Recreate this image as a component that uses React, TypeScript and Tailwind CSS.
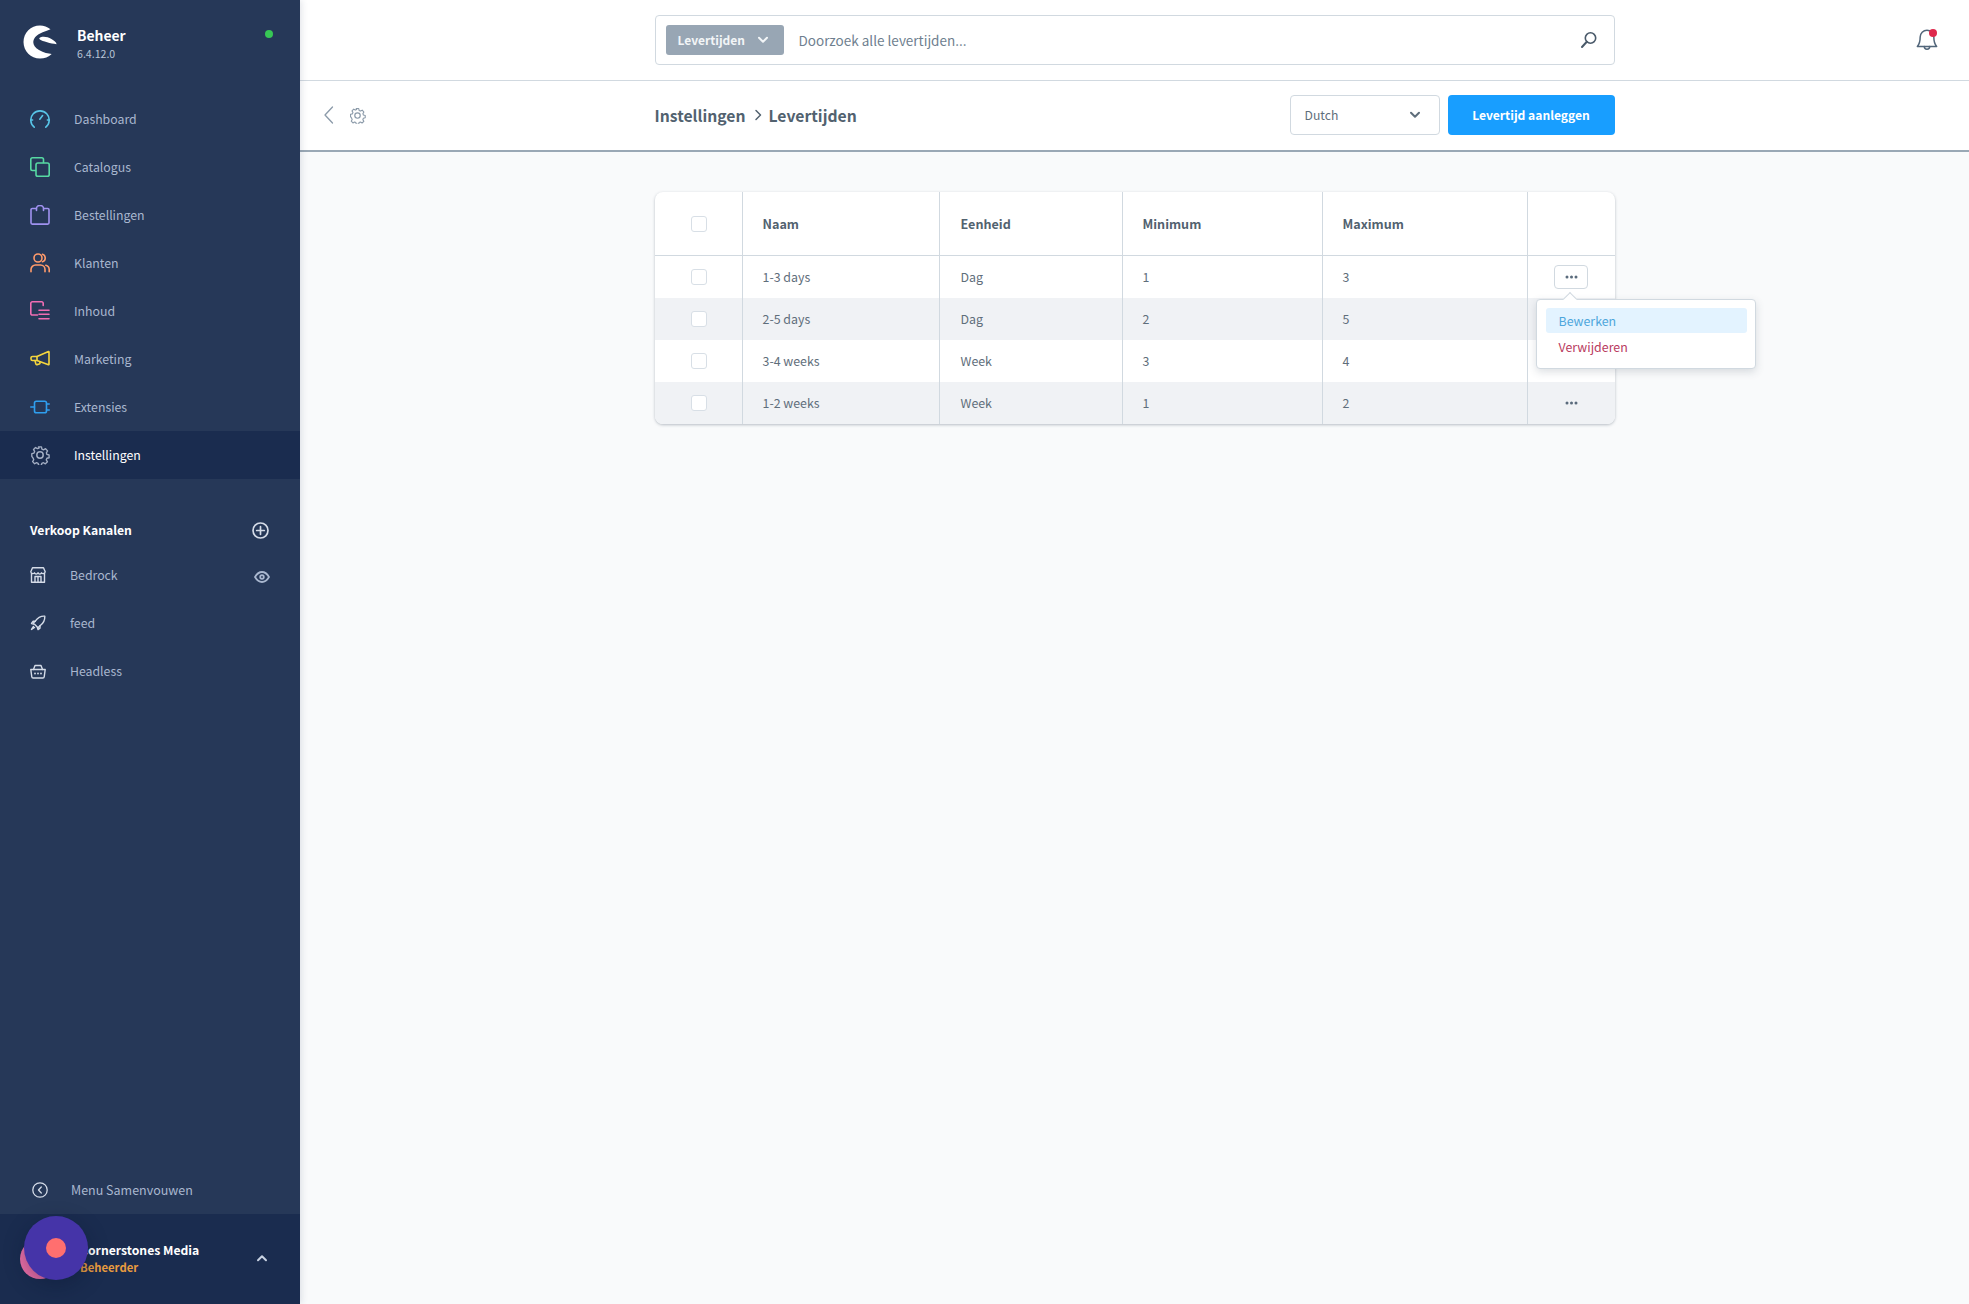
import React from "react";

const Stroke = ({ children, className, size = 20, vb = 20, sw = 1.6 }: { children: React.ReactNode; className?: string; size?: number; vb?: number; sw?: number }) => (
  <svg width={size} height={size} viewBox={`0 0 ${vb} ${vb}`} fill="none" stroke="currentColor" strokeWidth={sw} strokeLinecap="round" strokeLinejoin="round" className={className}>
    {children}
  </svg>
);

const Gear = ({ size = 20, sw = 1.5 }: { size?: number; sw?: number }) => (
  <Stroke size={size} sw={sw}>
    <circle cx="10" cy="10" r="3.2" />
    <path d="M8.4 1h3.2l.5 2.5 1.7.8 2.3-1.2 2.2 2.4-1.3 2.1.6 1.8 2.4.6v3l-2.4.6-.7 1.7 1.3 2.2-2.3 2.2-2.1-1.2-1.8.7-.5 2.3h-3l-.6-2.4-1.7-.7-2.1 1.2-2.2-2.3 1.2-2.1-.7-1.8L1 11.5v-3l2.4-.6.7-1.8-1.2-2.1 2.2-2.2 2.1 1.2 1.8-.7z" transform="translate(0.9 0.9) scale(0.91)" />
  </Stroke>
);

const navItems: { label: string; color: string; icon: React.ReactNode }[] = [
  {
    label: "Dashboard",
    color: "text-[#58c5e8]",
    icon: (
      <>
        <path d="M4.2 18.2A9.2 9.2 0 1 1 15.8 18.2" />
        <path d="M9.8 10.2 12.6 6.6" />
        <path d="M1 11h1.6M17.4 11H19" />
      </>
    ),
  },
  {
    label: "Catalogus",
    color: "text-[#57d9a3]",
    icon: (
      <>
        <path d="M5.5 13.5H2.5a1.7 1.7 0 0 1-1.7-1.7V2.5A1.7 1.7 0 0 1 2.5.8h9.3a1.7 1.7 0 0 1 1.7 1.7v3" />
        <rect x="6" y="6" width="13.2" height="13.2" rx="1.8" />
      </>
    ),
  },
  {
    label: "Bestellingen",
    color: "text-[#a092f0]",
    icon: (
      <>
        <path d="M6 3.5H2.3A1.3 1.3 0 0 0 1 4.8v13a1.3 1.3 0 0 0 1.3 1.3h15.4a1.3 1.3 0 0 0 1.3-1.3v-13a1.3 1.3 0 0 0-1.3-1.3H14" />
        <path d="M6.5 5.5V3.6a3.5 3.1 0 0 1 7 0v1.9" />
      </>
    ),
  },
  {
    label: "Klanten",
    color: "text-[#ff9b6b]",
    icon: (
      <>
        <circle cx="8" cy="5" r="4" />
        <path d="M1 18.8v-2.3A4.5 4.5 0 0 1 5.5 12h5a4.5 4.5 0 0 1 4.5 4.5v2.3" />
        <path d="M12.5 1.2a4 4 0 0 1 0 7.6" />
        <path d="M15.8 12.2a4.5 4.5 0 0 1 3.4 4.3v2.3" />
      </>
    ),
  },
  {
    label: "Inhoud",
    color: "text-[#ef6db3]",
    icon: (
      <>
        <path d="M7.5 14H2.3A1.5 1.5 0 0 1 .8 12.5V2.3A1.5 1.5 0 0 1 2.3.8h9.4a1.5 1.5 0 0 1 1.5 1.5v2.2" />
        <path d="M9 9.2h10M9 13.2h10M9 17.8h10" />
      </>
    ),
  },
  {
    label: "Marketing",
    color: "text-[#f5d63d]",
    icon: (
      <>
        <path d="M7 7.5 18.5 2.5a.4.4 0 0 1 .5.4v12.4a.4.4 0 0 1-.5.4L7 11.5H2.5A1.5 1.5 0 0 1 1 10V9a1.5 1.5 0 0 1 1.5-1.5z" />
        <path d="M7 7.5v4M5 11.5l.8 3.4a1 1 0 0 0 1.2.7l2.3-.6a1 1 0 0 0 .7-1.2l-.3-1" />
      </>
    ),
  },
  {
    label: "Extensies",
    color: "text-[#2f9fef]",
    icon: (
      <>
        <rect x="4.5" y="4.3" width="12" height="11.4" rx="1.8" />
        <path d="M.8 10h3.7M16.5 7h2.7M16.5 13h2.7" />
      </>
    ),
  },
];

const rows = [
  ["1-3 days", "Dag", "1", "3"],
  ["2-5 days", "Dag", "2", "5"],
  ["3-4 weeks", "Week", "3", "4"],
  ["1-2 weeks", "Week", "1", "2"],
];

const COLS = "grid grid-cols-[87px_197px_183px_200px_205px_88px]";

const Checkbox = () => <span className="block w-4 h-4 ml-[1px] rounded-[3px] border border-[#d8dfe6] bg-white" />;

const Dots = () => (
  <svg width="13" height="4" viewBox="0 0 13 4" fill="#5a6b7c">
    <circle cx="2" cy="2" r="1.5" />
    <circle cx="6.5" cy="2" r="1.5" />
    <circle cx="11" cy="2" r="1.5" />
  </svg>
);

const Chevron = ({ className }: { className?: string }) => (
  <svg width="12" height="8" viewBox="0 0 12 8" fill="none" stroke="currentColor" strokeWidth="2" strokeLinecap="round" strokeLinejoin="round" className={className}>
    <path d="M2 1.8 6 5.8 10 1.8" />
  </svg>
);

function Sidebar() {
  return (
    <aside className="w-[300px] shrink-0 h-[1304px] bg-[#263858] flex flex-col relative shadow-[2px_0_6px_rgba(40,60,90,0.12)]">
      <div className="h-[95px] shrink-0 flex items-start pt-[25px] pl-[23px] relative">
        <svg width="34" height="34" viewBox="0 0 34 34" fill="#fff">
          <path d="M27.5 4.3C24.5 1.8 20.8.5 17 .5 7.8.5.5 7.8.5 17S7.8 33.5 17 33.5c4.500 0 8.600-1.700 11.700-4.600-3.400-.4-8-1.200-12.700-4C12 22.600 10.300 20 10.300 17.200c0-3.500 2.600-6.800 6.800-8.700 3.300-1.500 7.400-2.900 10.400-4.200z" />
          <path d="M17.600 12.300c3-.9 7.400-.4 10.800 1.600 2.700 1.500 5 3.300 5.200 5.300-3.400-.5-6.200-1-9.500-2-3.200-1-5.800-1.800-7.200-2.800-1.100-.8-.6-1.600.7-2.100z" />
        </svg>
        <div className="ml-[20px] flex flex-col">
          <span className="text-white text-[13.9px] leading-[20px] font-semibold">Beheer</span>
          <span className="text-[#b8c4d6] text-[10.6px] leading-[15px] mt-[1px]">6.4.12.0</span>
        </div>
        <span className="absolute left-[265px] top-[30px] w-2 h-2 rounded-full bg-[#37c755]" />
      </div>
      <nav className="flex flex-col">
        {navItems.map((i) => (
          <div key={i.label} className="h-12 flex items-center pl-[30px]">
            <Stroke className={i.color}>{i.icon}</Stroke>
            <span className="ml-[24px] text-[12.3px] text-[#a9b7cf]">{i.label}</span>
          </div>
        ))}
        <div className="h-12 flex items-center pl-[30px] bg-[#1a2c4f]">
          <span className="text-[#a3aec3]">
            <Gear />
          </span>
          <span className="ml-[24px] text-[12.3px] text-white">Instellingen</span>
        </div>
      </nav>
      <div className="mt-[39px] h-6 flex items-center justify-between pl-[30px] pr-[31px]">
        <span className="text-white text-[12.2px] font-semibold">Verkoop Kanalen</span>
        <Stroke size={17} sw={2} className="text-[#d5dce8]">
          <circle cx="10" cy="10" r="8.8" />
          <path d="M10 5.5v9M5.5 10h9" />
        </Stroke>
      </div>
      <div className="mt-[9px] flex flex-col">
        <div className="h-12 flex items-center pl-[30px] pr-[30px]">
          <Stroke size={16} sw={1.4} vb={16} className="text-[#d5dce8]">
            <path d="M2.5 .8h11l1.7 4a2 2 0 0 1-3.6 1 1.9 1.9 0 0 1-3.6 0 1.9 1.9 0 0 1-3.6 0 2 2 0 0 1-3.6-1z" />
            <path d="M1.5 6.5v8.7h13V6.5" />
            <path d="M5 15V9.5h6V15M8 9.5V15" />
          </Stroke>
          <span className="ml-[24px] text-[12.3px] text-[#a9b7cf] flex-1">Bedrock</span>
          <Stroke size={16} sw={1.8} vb={16} className="text-[#a9b7cf] mt-[3px]">
            <path d="M1 8c2-3.400 4.400-5 7-5s5 1.600 7 5c-2 3.400-4.400 5-7 5s-5-1.600-7-5z" />
            <circle cx="8" cy="8" r="1.8" />
          </Stroke>
        </div>
        <div className="h-12 flex items-center pl-[30px]">
          <Stroke size={16} sw={1.4} vb={16} className="text-[#d5dce8]">
            <path d="M14.8 1.200c-4-.3-7 1.300-9.500 5l-2 1.800 4.700 4.700 2-1.900c3.400-2.500 5-5.600 4.800-9.600z" />
            <path d="M5.300 6.300H3L1.500 8.500l2 .6M10 10.800v2.300l-2 1.500-.6-2" />
            <path d="M3.500 11.500 1.500 14.500l3-2" />
          </Stroke>
          <span className="ml-[24px] text-[12.3px] text-[#a9b7cf]">feed</span>
        </div>
        <div className="h-12 flex items-center pl-[30px]">
          <Stroke size={16} sw={1.4} vb={16} className="text-[#d5dce8]">
            <path d="M.8 6.500h14.400l-1 7.300a1.300 1.300 0 0 1-1.300 1.200H3.100a1.300 1.300 0 0 1-1.300-1.200z" />
            <path d="M3.500 6.500 5 2.500h6l1.500 4" />
            <path d="M5 10.500h.01M8 10.500h.01M11 10.500h.01" strokeWidth="1.8" />
          </Stroke>
          <span className="ml-[24px] text-[12.3px] text-[#a9b7cf]">Headless</span>
        </div>
      </div>
      <div className="mt-auto h-12 flex items-center pl-[32px]">
        <Stroke size={16} sw={1.3} vb={16} className="text-[#d5dce8]">
          <circle cx="8" cy="8" r="7.2" />
          <path d="M9.300 5 6.500 8l2.800 3" />
        </Stroke>
        <span className="ml-[23px] text-[12.5px] text-[#a9b7cf]">Menu Samenvouwen</span>
      </div>
      <div className="h-[90px] bg-[#1a2c4f] relative flex items-center">
        <span className="absolute left-[20px] top-[25px] w-10 h-10 rounded-full bg-[#ee6fa8]" />
        <div className="pl-[80px] flex flex-col mt-[-1px]">
          <span className="text-white text-[12.2px] leading-[18px] font-semibold">Cornerstones Media</span>
          <span className="text-[#e89c3f] text-[11.3px] leading-[17px] font-semibold">Beheerder</span>
        </div>
        <Chevron className="absolute left-[256px] top-[40px] rotate-180 text-[#c8d2e2]" />
      </div>
      <div className="absolute left-[24px] top-[1216px] w-16 h-16 rounded-full bg-[#4534a8] shadow-[0_6px_20px_rgba(10,20,50,0.35)] flex items-center justify-center">
        <span className="w-5 h-5 rounded-full bg-[#ff6f6f]" />
      </div>
    </aside>
  );
}

function Main() {
  return (
    <main className="flex-1 min-w-0 flex flex-col bg-[#f9fafb] h-[1304px] text-[#52626f]">
      <header className="h-[81px] shrink-0 bg-white border-b border-[#d1d9e0] grid grid-cols-[1fr_960px_1fr] items-center">
        <div />
        <div className="h-[50px] rounded-[4px] border border-[#d1d9e0] flex items-center pl-[10px] pr-[16px] mt-[-1px]">
          <div className="w-[118px] h-[30px] rounded-[3px] bg-[#98a6b4] flex items-center justify-between pl-[12px] pr-[15px] text-[#f2f5f7] text-[12px] font-semibold">
            <span>Levertijden</span>
            <Chevron />
          </div>
          <span className="ml-[15px] mt-[1px] flex-1 text-[#6f7f8f] text-[13.5px]">Doorzoek alle levertijden...</span>
          <svg width="18" height="18" viewBox="0 0 18 18" fill="none" stroke="#4a5a6a" strokeWidth="1.6" strokeLinecap="round">
            <circle cx="10.5" cy="7" r="5.2" />
            <path d="M6.800 10.800 2 16" strokeWidth="2" />
          </svg>
        </div>
        <div className="relative h-full">
          <svg width="26" height="26" viewBox="0 0 24 24" fill="none" stroke="#52667a" strokeWidth="1.4" strokeLinecap="round" strokeLinejoin="round" className="absolute left-[299px] top-[27px]">
            <path d="M12 3a6.300 6.300 0 0 0-6.300 6.300c0 5-.8 6.700-2.600 8.700h17.800c-1.800-2-2.600-3.700-2.600-8.700A6.300 6.300 0 0 0 12 3z" />
            <path d="M9.500 18a2.500 2.500 0 0 0 5 0" />
          </svg>
          <span className="absolute left-[314px] top-[29px] w-2 h-2 rounded-full bg-[#de294c]" />
        </div>
      </header>
      <div className="h-[71px] shrink-0 bg-white border-b-2 border-[#9aa8b5] grid grid-cols-[1fr_960px_1fr] items-center pb-[1px]">
        <div className="flex items-center pl-[24px] text-[#8b9aa9]">
          <svg width="10" height="18" viewBox="0 0 10 18" fill="none" stroke="currentColor" strokeWidth="1.3" strokeLinecap="round" strokeLinejoin="round">
            <path d="M8.500 1 1 9l7.500 8" />
          </svg>
          <span className="ml-[15px] flex">
            <Gear size={17} sw={1.4} />
          </span>
        </div>
        <div className="flex items-center">
          <h1 className="text-[15.7px] font-semibold flex items-center m-0 mt-[1px]">
            Instellingen
            <svg width="8" height="12" viewBox="0 0 8 12" fill="none" stroke="currentColor" strokeWidth="1.5" strokeLinecap="round" strokeLinejoin="round" className="ml-[8px] mr-[7px]">
              <path d="M2 1.500 6.500 6 2 10.500" />
            </svg>
            Levertijden
          </h1>
          <div className="ml-auto w-[150px] h-10 rounded-[4px] border border-[#d1d9e0] bg-white flex items-center justify-between pl-[14px] pr-[18px] text-[12.2px] text-[#5f6e7b]">
            <span>Dutch</span>
            <Chevron />
          </div>
          <button className="ml-[8px] w-[167px] h-10 rounded-[4px] bg-[#189eff] text-white text-[12.1px] font-semibold">Levertijd aanleggen</button>
        </div>
        <div />
      </div>
      <section className="w-[960px] mx-auto mt-[40px] relative">
        <div className="rounded-[8px] bg-white shadow-[0_1px_3px_rgba(60,75,95,0.35)] overflow-hidden">
          <div className={`${COLS} h-[64px] pt-0 border-b border-[#d1d9e0] items-stretch text-[12.6px] font-bold`}>
            <div className="flex items-center justify-center"><Checkbox /></div>
            <div className="flex items-center pl-[20px] pt-[2px] border-l border-[#d1d9e0]">Naam</div>
            <div className="flex items-center pl-[21px] pt-[2px] border-l border-[#d1d9e0]">Eenheid</div>
            <div className="flex items-center pl-[20px] pt-[2px] border-l border-[#d1d9e0]">Minimum</div>
            <div className="flex items-center pl-[20px] pt-[2px] border-l border-[#d1d9e0]">Maximum</div>
            <div className="border-l border-[#d1d9e0]" />
          </div>
          {rows.map((r, i) => (
            <div key={r[0]} className={`${COLS} h-[42px] items-stretch text-[12.4px] text-[#5f6e7b] ${i % 2 === 1 ? "bg-[#f0f2f5]" : "bg-white"}`}>
              <div className="flex items-center justify-center"><Checkbox /></div>
              <div className="flex items-center pl-[20px] border-l border-[#d1d9e0]">{r[0]}</div>
              <div className="flex items-center pl-[21px] border-l border-[#d1d9e0]">{r[1]}</div>
              <div className="flex items-center pl-[20px] border-l border-[#d1d9e0]">{r[2]}</div>
              <div className="flex items-center pl-[20px] border-l border-[#d1d9e0]">{r[3]}</div>
              <div className="flex items-center justify-center border-l border-[#d1d9e0]">
                {i === 0 ? (
                  <span className="w-[34px] h-[24px] rounded-[4px] border border-[#d1d9e0] bg-white flex items-center justify-center"><Dots /></span>
                ) : i === 3 ? (
                  <Dots />
                ) : null}
              </div>
            </div>
          ))}
        </div>
        <div className="absolute left-[881px] top-[107px] w-[220px] h-[70px] rounded-[4px] bg-white border border-[#d1d9e0] shadow-[0_3px_8px_rgba(60,75,95,0.18)] pt-[8px] pl-[9px] pr-[8px]">
          <span className="absolute left-[28px] top-[-6px] w-[10px] h-[10px] rotate-45 bg-white border-l border-t border-[#d1d9e0]" />
          <div className="h-[25px] pt-[1px] rounded-[3px] bg-[#e3f3ff] pl-[13px] flex items-center text-[12.4px] text-[#4ea6dc]">Bewerken</div>
          <div className="h-[27px] pt-[1px] pl-[13px] flex items-center text-[12.4px] text-[#b93a5e]">Verwijderen</div>
        </div>
      </section>
    </main>
  );
}

export default function App() {
  return (
    <div className="flex w-[1969px] h-[1304px] overflow-hidden font-['Noto_Sans_CJK_SC','Noto_Sans',sans-serif]">
      <Sidebar />
      <Main />
    </div>
  );
}
